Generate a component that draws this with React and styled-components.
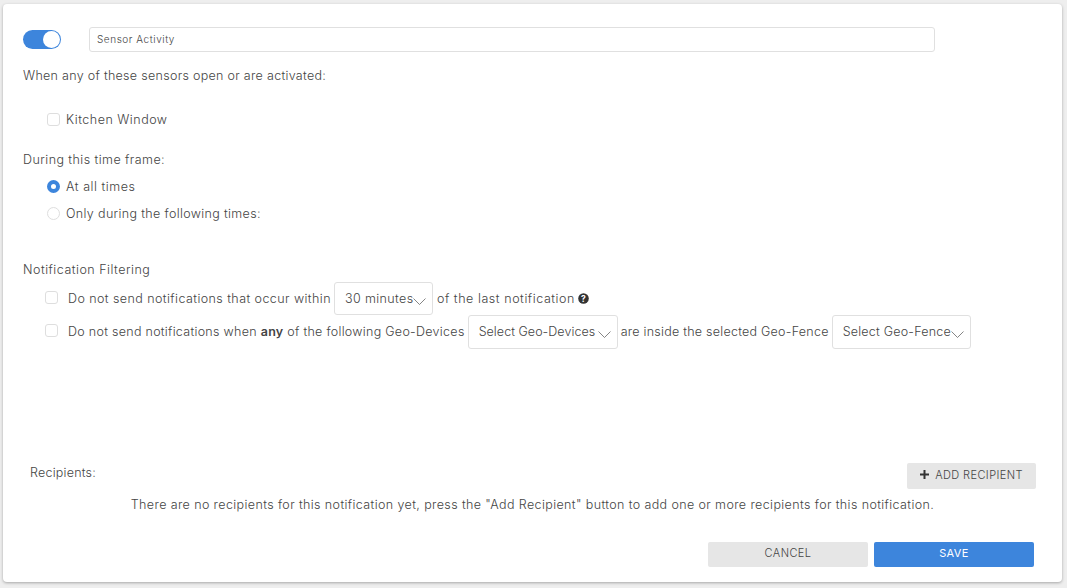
import React from "react";
import styled, { createGlobalStyle } from "styled-components";

const Global = createGlobalStyle`
  html, body { margin: 0; padding: 0; background: #eeeeee; }
  body { width: 1067px; height: 588px; overflow: hidden; font-family: "Inter", "Liberation Sans", sans-serif; font-weight: 300; color: #444; }
`;
const Card = styled.main`
  box-sizing: border-box; width: 1059px; height: 578px; margin: 4px 0 0 3px;
  background: #fff; border-radius: 4px; box-shadow: 0 1px 3px rgba(0,0,0,.3);
  padding: 23px 26px 15px 20px; display: flex; flex-direction: column;
  font-size: 12.5px; letter-spacing: .22px;
`;
const Header = styled.div`display: flex; align-items: center; gap: 28px; height: 25px;`;
const Toggle = styled.span`
  box-sizing: border-box; width: 38px; height: 19px; border-radius: 10px; background: #3d85dc;
  display: flex; justify-content: flex-end; align-items: center; padding-right: 1px;
  &::after { content: ""; width: 17px; height: 17px; border-radius: 50%; background: #fff; }
`;
const NameInput = styled.div`
  box-sizing: border-box; width: 846px; height: 25px; border: 1px solid #e0e0e0; border-radius: 3px;
  display: flex; align-items: center; padding: 0 0 2px 7px; font-size: 10px; letter-spacing: .55px;
`;
const Text = styled.div`
  line-height: 16px; margin-top: ${p => p.$top || 0}px; white-space: nowrap; letter-spacing: ${p => p.$track ?? 0.22}px;
`;
const Choice = styled.div`
  display: flex; align-items: center; height: 16px; margin-left: 24px; margin-top: ${p => p.$top}px; gap: 6px; white-space: nowrap; letter-spacing: ${p => p.$track}px;
`;
const Box = styled.span`
  box-sizing: border-box; flex: none; width: 13px; height: 13px; border: 1px solid #dedede; border-radius: 3px; background: #fff;
`;
const Radio = styled.span`
  box-sizing: border-box; flex: none; width: 13px; height: 13px; border-radius: 50%;
  border: ${p => p.$on ? "4px solid #3d85dc" : "1px solid #dedede"}; background: #fff;
`;
const FilterRow = styled.div`
  display: flex; align-items: center; margin-left: 22px; white-space: nowrap; height: 33px; box-sizing: border-box; padding-top: 2px;
  margin-top: ${p => p.$top || 0}px;
`;
const FilterBox = styled(Box)`margin: -2px 10px 0 0;`;
const Phrase = styled.span`letter-spacing: ${p => p.$track}px; margin-left: ${p => p.$left || 0}px;`;
const Strong = styled.b`font-weight: 600;`;
const Select = styled.div`
  box-sizing: border-box; flex: none; height: ${p => p.$h}px; width: ${p => p.$w}px; margin: -1px 3px; border: 1px solid #e0e0e0; border-radius: 3px;
  display: flex; align-items: center; padding-left: 10px; position: relative; letter-spacing: ${p => p.$track}px;
`;
const Chev = styled.svg`position: absolute; right: 6px; top: 15px;`;
const Help = styled.svg`margin-left: 3px;`;
const RecipHead = styled.div`
  display: flex; justify-content: space-between; align-items: flex-start; margin: 116px 0 0 7px; height: 26px;
`;
const RecipLabel = styled(Text)`margin-top: 2px;`;
const AddBtn = styled.button`
  width: 129px; height: 26px; border: 0; border-radius: 2px; background: #e6e6e6; color: #444;
  font: 300 11px "Inter", "Liberation Sans", sans-serif; letter-spacing: .4px; display: flex; align-items: center; justify-content: center; gap: 6px; padding: 0 0 3px;
`;
const Message = styled.div`text-align: center; line-height: 16px; margin-top: 8px; padding-left: 6px; white-space: nowrap; letter-spacing: .39px;`;
const Actions = styled.div`display: flex; justify-content: flex-end; gap: 6px; margin: 29px 2px 0 0;`;
const Action = styled.button`
  width: 160px; height: 25px; border: 0; border-radius: 2px; padding: 0 0 3px;
  background: ${p => p.$primary ? "#3d85dc" : "#e6e6e6"}; color: ${p => p.$primary ? "#fff" : "#444"};
  font: ${p => p.$primary ? 400 : 300} 11px "Inter", "Liberation Sans", sans-serif; letter-spacing: .4px;
`;
const Chevron = () => (
  <Chev width="13" height="7" viewBox="0 0 13 7" fill="none"><path d="M.5.5l6 6 6-6" stroke="#666" strokeWidth=".8" /></Chev>
);

export default function App() {
  return (
    <>
      <Global />
      <Card>
        <Header>
          <Toggle />
          <NameInput>Sensor Activity</NameInput>
        </Header>
        <Text $top={16} $track={0.3}>When any of these sensors open or are activated:</Text>
        <Choice $top={27} $track={0.5}><Box />Kitchen Window</Choice>
        <Text $top={25} $track={0.44}>During this time frame:</Text>
        <Choice $top={10} $track={0.55}><Radio $on />At all times</Choice>
        <Choice $top={11} $track={0.35}><Radio />Only during the following times:</Choice>
        <Text $top={41} $track={0.5}>Notification Filtering</Text>
        <FilterRow $top={3}>
          <FilterBox /><Phrase $track={0.43}>Do not send notifications that occur within</Phrase>
          <Select $w={99} $h={33} $track={0.4}>30 minutes<Chevron /></Select>
          <Phrase $track={0.56} $left={1}>of the last notification</Phrase>
          <Help width="11" height="11" viewBox="0 0 11 11"><circle cx="5.5" cy="5.5" r="5.3" fill="#333" /><text x="5.5" y="8.6" textAnchor="middle" fontSize="8.5" fontWeight="700" fill="#fff">?</text></Help>
        </FilterRow>
        <FilterRow>
          <FilterBox /><Phrase $track={0.29}>Do not send notifications when <Strong>any</Strong> of the following Geo-Devices</Phrase>
          <Select $w={150} $h={34} $track={0.05}>Select Geo-Devices<Chevron /></Select>
          <Phrase $track={0.25}>are inside the selected Geo-Fence</Phrase>
          <Select $w={139} $h={34} $track={0.22}>Select Geo-Fence<Chevron /></Select>
        </FilterRow>
        <RecipHead>
          <RecipLabel>Recipients:</RecipLabel>
          <AddBtn><svg width="9" height="9" viewBox="0 0 9 9"><path d="M4.5 0v9M0 4.5h9" stroke="#333" strokeWidth="2" /></svg>ADD RECIPIENT</AddBtn>
        </RecipHead>
        <Message>There are no recipients for this notification yet, press the "Add Recipient" button to add one or more recipients for this notification.</Message>
        <Actions>
          <Action>CANCEL</Action>
          <Action $primary>SAVE</Action>
        </Actions>
      </Card>
    </>
  );
}
